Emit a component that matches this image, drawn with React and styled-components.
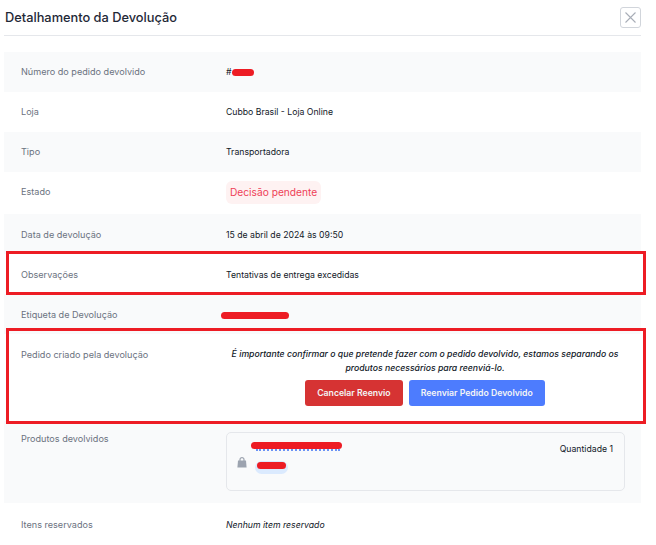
import React from "react";
import styled, { createGlobalStyle } from "styled-components";

const GlobalStyle = createGlobalStyle`
  html, body {
    margin: 0;
    padding: 0;
    background: #fff;
    font-family: Inter, "Liberation Sans", sans-serif;
    overflow: hidden;
  }
  * { box-sizing: border-box; }
`;

const Page = styled.div`
  width: 656px;
  height: 545px;
  padding: 0 15px 0 4px;
  overflow: hidden;
`;

const Header = styled.header`
  height: 36px;
  padding-left: 1px;
  border-bottom: 1px solid #e5e7eb;
  display: flex;
  align-items: flex-start;
  justify-content: space-between;
  margin-bottom: 16px;
`;

const Title = styled.h1`
  margin: 8px 0 0;
  font-size: 12.8px;
  line-height: 19px;
  font-weight: 500;
  color: #1f2937;
`;

const CloseBtn = styled.button`
  width: 21px;
  height: 21px;
  margin: 7px 0 0 0;
  padding: 0;
  background: #fff;
  border: 1px solid #d1d5db;
  border-radius: 3px;
  display: flex;
  align-items: center;
  justify-content: center;
  color: #a8adb7;
`;

const Row = styled.div`
  position: relative;
  display: grid;
  grid-template-columns: 205px 1fr;
  min-height: ${(p) => p.$height}px;
  padding: ${(p) => p.$padTop ?? 13}px 17px 0;
  background: ${(p) => (p.$shaded ? "#f9fafb" : "#fff")};
`;

const Label = styled.div`
  font-size: 9.1px;
  line-height: 14px;
  font-weight: 400;
  color: #6b7280;
`;

const Value = styled.div`
  font-size: 8.7px;
  line-height: 14px;
  color: #111827;
  font-style: ${(p) => (p.$italic ? "italic" : "normal")};
`;

const Badge = styled.span`
  display: inline-block;
  margin-top: -4px;
  padding: 2px 4px;
  font-size: 10.2px;
  line-height: 19px;
  color: #ee4057;
  background: #fef2f2;
  border-radius: 6px;
`;

const Scribble = styled.span`
  display: inline-block;
  position: relative;
  width: ${(p) => p.$w}px;
  height: ${(p) => p.$h}px;
  margin-left: ${(p) => p.$shift ?? 0}px;
  background: #ed1c24;
  border-radius: ${(p) => p.$h / 2}px;
  vertical-align: middle;
`;

/* the blue link text still peeks out below the red mark */
const LinkScribble = styled(Scribble)`
  &::after {
    content: "";
    position: absolute;
    left: 5px;
    right: 2px;
    bottom: -2px;
    border-bottom: 2px dotted #6b93f5;
    z-index: -1;
  }
`;

const Notice = styled.div`
  text-align: center;
`;

const NoticeText = styled.p`
  margin: 0;
  font-size: 8.7px;
  line-height: 13.5px;
  font-style: italic;
  font-weight: 500;
  color: #111827;
`;

const Actions = styled.div`
  display: flex;
  justify-content: center;
  gap: 6px;
  margin-top: 5px;
`;

const Action = styled.button`
  height: 26px;
  padding: 0 12px;
  border: none;
  border-radius: 3px;
  font-family: inherit;
  font-size: 8.7px;
  font-weight: 600;
  color: #f3f4f6;
  background: ${(p) => (p.$danger ? "#d63333" : "#4d7cfe")};
`;

const ProductCard = styled.div`
  height: 59px;
  width: 399px;
  padding: 0 11px;
  background: #f9fafb;
  border: 1px solid #e5e7eb;
  border-radius: 5px;
  display: flex;
  align-items: flex-start;
  isolation: isolate;
`;

const ProductIcon = styled.div`
  margin: 19px 4px 0 -1px;
  width: 10px;
  color: #9ca3af;
`;

const ProductInfo = styled.div`
  flex: 1;
  padding-top: 9px;
  display: flex;
  flex-direction: column;
  align-items: flex-start;
  gap: 12px;
`;

const SkuPill = styled.span`
  display: inline-flex;
  align-items: flex-start;
  justify-content: center;
  flex: none;
  width: 33px;
  height: 13px;
  padding-top: 1px;
  margin-left: 4px;
  background: #dbeafe;
  border-radius: 7px;
`;

const Quantity = styled.div`
  margin-top: 9px;
  font-size: 8.7px;
  line-height: 14px;
  color: #111827;
`;

/* red boxes drawn over the screenshot */
const Highlight = styled.div`
  position: absolute;
  z-index: 1;
  left: 2px;
  right: -5px;
  top: ${(p) => p.$top}px;
  bottom: ${(p) => p.$bottom}px;
  border: 3px solid #ed1c24;
  pointer-events: none;
`;

const BagIcon = () => (
  <svg width="10" height="11" viewBox="0 0 10 11" aria-hidden="true">
    <path d="M3 4V2.6a2 2 0 0 1 4 0V4" fill="none" stroke="currentColor" strokeWidth="1.2" />
    <path d="M1 3.6h8l.6 7H.4z" fill="currentColor" />
  </svg>
);

export default function App() {
  return (
    <>
      <GlobalStyle />
      <Page>
        <Header>
          <Title>Detalhamento da Devolução</Title>
          <CloseBtn aria-label="Fechar">
            <svg width="13" height="13" viewBox="0 0 13 13" aria-hidden="true">
              <path d="M1.5 1.5l10 10M11.5 1.5l-10 10" stroke="currentColor" strokeWidth="1.1" fill="none" />
            </svg>
          </CloseBtn>
        </Header>

        <Row $shaded $height={40}>
          <Label>Número do pedido devolvido</Label>
          <Value># <Scribble $w={22} $h={7} $shift={-2} /></Value>
        </Row>
        <Row $height={40}>
          <Label>Loja</Label>
          <Value>Cubbo Brasil - Loja Online</Value>
        </Row>
        <Row $shaded $height={40}>
          <Label>Tipo</Label>
          <Value>Transportadora</Value>
        </Row>
        <Row $height={42}>
          <Label>Estado</Label>
          <Value><Badge>Decisão pendente</Badge></Value>
        </Row>
        <Row $shaded $height={40} $padTop={14}>
          <Label>Data de devolução</Label>
          <Value>15 de abril de 2024 às 09:50</Value>
        </Row>
        <Row $height={40} $padTop={14}>
          <Label>Observações</Label>
          <Value>Tentativas de entrega excedidas</Value>
          <Highlight $top={-3} $bottom={-1} />
        </Row>
        <Row $shaded $height={40} $padTop={14}>
          <Label>Etiqueta de Devolução</Label>
          <Value><Scribble $w={68} $h={7} $shift={-5} /></Value>
        </Row>
        <Row $height={87} $padTop={14}>
          <Label>Pedido criado pela devolução</Label>
          <Notice>
            <NoticeText>
              É importante confirmar o que pretende fazer com o pedido devolvido, estamos separando os
              produtos necessários para reenviá-lo.
            </NoticeText>
            <Actions>
              <Action $danger>Cancelar Reenvio</Action>
              <Action>Reenviar Pedido Devolvido</Action>
            </Actions>
          </Notice>
          <Highlight $top={-6} $bottom={-3} />
        </Row>
        <Row $shaded $height={82} $padTop={11}>
          <Label>Produtos devolvidos</Label>
          <ProductCard>
            <ProductIcon><BagIcon /></ProductIcon>
            <ProductInfo>
              <LinkScribble $w={91} $h={7} />
              <SkuPill><Scribble $w={29} $h={7} /></SkuPill>
            </ProductInfo>
            <Quantity>Quantidade 1</Quantity>
          </ProductCard>
        </Row>
        <Row $height={42} $padTop={15}>
          <Label>Itens reservados</Label>
          <Value $italic>Nenhum item reservado</Value>
        </Row>
      </Page>
    </>
  );
}
